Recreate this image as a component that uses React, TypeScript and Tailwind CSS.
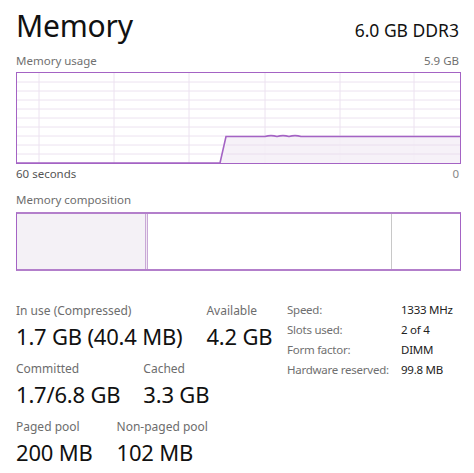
import React from "react";

const PURPLE = "#a463c4";
const GRID = "#ece2f0";

function UsageGraph() {
  const w = 443;
  const h = 90;
  const hLines = Array.from({ length: 9 }, (_, i) => ((i + 1) * h) / 10);
  const vLines = [22, 97, 172, 248, 323, 397];
  const flatY = 63.5;
  const path = `M0 ${h} L203 ${h} L209 ${flatY} L248 ${flatY} C252 ${flatY - 1.2} 256 ${flatY - 1.2} 260 ${flatY} C264 ${flatY - 1.2} 268 ${flatY - 1.2} 272 ${flatY} C276 ${flatY - 1.2} 280 ${flatY - 1.2} 284 ${flatY} L${w} ${flatY}`;
  const fill = `M203 ${h} L209 ${flatY} L${w} ${flatY} L${w} ${h} Z`;
  return (
    <div className="border border-[#a463c4] w-[445px] h-[92px] bg-white">
      <svg width={w} height={h} className="block">
        {hLines.map((y) => (
          <line key={y} x1={0} x2={w} y1={y} y2={y} stroke={GRID} strokeWidth={1} />
        ))}
        {vLines.map((x) => (
          <line key={x} x1={x} x2={x} y1={0} y2={h} stroke={GRID} strokeWidth={1} />
        ))}
        <path d={fill} fill="#f4eef7" fillOpacity={0.85} />
        {hLines
          .filter((y) => y > flatY)
          .map((y) => (
            <line key={"o" + y} x1={209} x2={w} y1={y} y2={y} stroke="#ebe0ef" strokeWidth={1} />
          ))}
        <path d={path} fill="none" stroke={PURPLE} strokeWidth={1.6} />
      </svg>
    </div>
  );
}

function CompositionBar() {
  return (
    <div className="border-y-2 border-x border-[#a463c4] border-t-[#b37fcb] border-b-[#b37fcb] w-[445px] h-[59px] flex bg-white">
      <div className="w-[128px] h-full bg-[#f4f1f6]" />
      <div className="w-[1px] h-full bg-[#c9a8d6]" />
      <div className="w-[1px] h-full bg-[#f0e8f3]" />
      <div className="w-[1px] h-full bg-[#c9a8d6]" />
      <div className="w-[243px] h-full" />
      <div className="w-[1px] h-full bg-[#c8c8c8]" />
      <div className="flex-1 h-full" />
    </div>
  );
}

function Stat({ label, value }: { label: string; value: string }) {
  return (
    <div className="flex flex-col">
      <div className="text-[12px] leading-[16px] text-[#6d6d6d]">{label}</div>
      <div className="text-[22px] leading-[28px] text-[#111] mt-[3px] tracking-[-0.2px]">{value}</div>
    </div>
  );
}

export default function App() {
  const font = { fontFamily: '"Noto Sans", "Open Sans", sans-serif' };
  return (
    <div className="w-[474px] h-[473px] bg-white overflow-hidden pl-[16px] pr-[14px]" style={font}>
      <div className="flex items-baseline justify-between pt-[4px] h-[50px]">
        <div className="text-[30px] leading-[44px] text-[#111] tracking-[-0.2px]">Memory</div>
        <div className="text-[17.5px] leading-[24px] text-[#111] pr-[1px]">6.0 GB DDR3</div>
      </div>
      <div className="flex justify-between text-[11.5px] leading-[16px] text-[#707070] mt-[3px] h-[19px] pr-[1px]">
        <span>Memory usage</span>
        <span>5.9 GB</span>
      </div>
      <UsageGraph />
      <div className="flex justify-between text-[11.5px] leading-[16px] text-[#555] mt-[2px] pr-[1px]">
        <span>60 seconds</span>
        <span className="text-[#888]">0</span>
      </div>
      <div className="text-[11.5px] leading-[16px] text-[#6d6d6d] mt-[10px] h-[20px]">Memory composition</div>
      <CompositionBar />
      <div className="flex mt-[32px]">
        <div className="flex flex-col w-[271px] gap-[11px]">
          <div className="flex gap-[24px]">
            <Stat label="In use (Compressed)" value="1.7 GB (40.4 MB)" />
            <Stat label="Available" value="4.2 GB" />
          </div>
          <div className="flex gap-[23px]">
            <Stat label="Committed" value="1.7/6.8 GB" />
            <Stat label="Cached" value="3.3 GB" />
          </div>
          <div className="flex gap-[24px]">
            <Stat label="Paged pool" value="200 MB" />
            <Stat label="Non-paged pool" value="102 MB" />
          </div>
        </div>
        <div className="grid grid-cols-[114px_1fr] text-[11.5px] leading-[20px] tracking-[-0.25px] content-start -mt-[3px]">
          <span className="text-[#707070]">Speed:</span>
          <span className="text-[#222]">1333 MHz</span>
          <span className="text-[#707070]">Slots used:</span>
          <span className="text-[#222]">2 of 4</span>
          <span className="text-[#707070]">Form factor:</span>
          <span className="text-[#222]">DIMM</span>
          <span className="text-[#707070]">Hardware reserved:</span>
          <span className="text-[#222]">99.8 MB</span>
        </div>
      </div>
    </div>
  );
}
